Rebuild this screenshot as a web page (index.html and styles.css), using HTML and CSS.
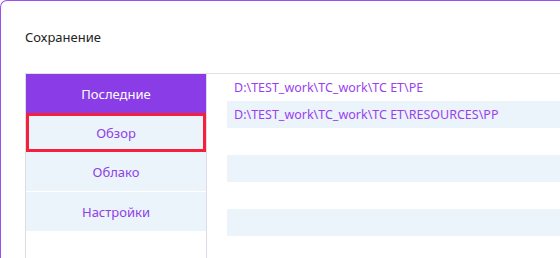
FILE: index.html
```html
<!DOCTYPE html>
<html lang="ru">
<head>
  <meta charset="UTF-8">
  <title>Сохранение</title>
  <link rel="stylesheet" href="styles.css">
</head>
<body>
  <div class="dialog">
    <h2 class="title">Сохранение</h2>
    <div class="panel">
      <div class="tabs">
        <div class="tab active">Последние</div>
        <div class="tab selected">Обзор</div>
        <div class="tab">Облако</div>
        <div class="tab">Настройки</div>
      </div>
      <div class="list">
        <div class="row">D:\TEST_work\TC_work\TC ET\PE</div>
        <div class="row">D:\TEST_work\TC_work\TC ET\RESOURCES\PP</div>
        <div class="row"></div>
        <div class="row"></div>
        <div class="row"></div>
        <div class="row"></div>
      </div>
    </div>
  </div>
</body>
</html>
```

FILE: styles.css
```css
html, body {
  margin: 0;
  padding: 0;
  background: #fff;
}
body {
  font-family: 'Noto Sans', 'Open Sans', sans-serif;
  width: 560px;
  height: 258px;
  overflow: hidden;
}
.dialog {
  box-sizing: border-box;
  width: 560px;
  height: 258px;
  border-left: 1px solid #9d4ff0;
  border-top: 1px solid #9d4ff0;
  border-top-left-radius: 7px;
  background: #fff;
  padding: 27px 0 0 24px;
}
.title {
  margin: 0;
  font-size: 13px;
  font-weight: normal;
  color: #222;
  line-height: 18px;
  height: 45px;
}
.panel {
  display: flex;
  height: 185px;
  border-top: 1px solid #e2e2e6;
}
.tabs {
  width: 180px;
  flex-shrink: 0;
  border-left: 1px solid #dcdce6;
  border-right: 1px solid #dcdce6;
}
.tab {
  box-sizing: border-box;
  height: 40px;
  padding-top: 2px;
  line-height: 37px;
  text-align: center;
  font-size: 13px;
  color: #8f40e8;
  background: #ebf3fb;
  border-bottom: 1px solid #fff;
}
.tab.active {
  height: 39px;
  padding-top: 1px;
  line-height: 38px;
  background: #8a3de6;
  color: #fff;
  border-bottom: none;
}
.tab.selected {
  height: 39px;
  padding-top: 1px;
  line-height: 32px;
  border: 3px solid #f5213c;
}
.list {
  flex: 1;
  min-width: 0;
  padding-left: 20px;
}
.row {
  height: 27px;
  line-height: 27px;
  padding-left: 7px;
  font-size: 12.5px;
  color: #9a3ff0;
  white-space: nowrap;
}
.row:nth-child(even) {
  background: #ebf3fb;
}
```
